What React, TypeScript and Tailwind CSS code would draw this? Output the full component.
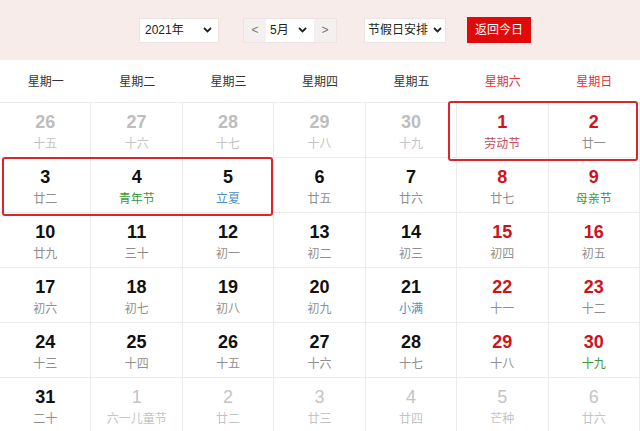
import React from 'react';

type Day = {
  n: number;
  sub: string;
  kind: 'prev' | 'cur' | 'next';
  red?: boolean;
  subColor?: string;
};

const WEEK = ['星期一', '星期二', '星期三', '星期四', '星期五', '星期六', '星期日'];

const GREEN = 'text-[#3c9a3c]';
const BLUE = 'text-[#4a8fc4]';

const days: Day[] = [
  { n: 26, sub: '十五', kind: 'prev' },
  { n: 27, sub: '十六', kind: 'prev' },
  { n: 28, sub: '十七', kind: 'prev' },
  { n: 29, sub: '十八', kind: 'prev' },
  { n: 30, sub: '十九', kind: 'prev' },
  { n: 1, sub: '劳动节', kind: 'cur', red: true, subColor: 'text-[#c9485a]' },
  { n: 2, sub: '廿一', kind: 'cur', red: true },
  { n: 3, sub: '廿二', kind: 'cur' },
  { n: 4, sub: '青年节', kind: 'cur', subColor: GREEN },
  { n: 5, sub: '立夏', kind: 'cur', subColor: BLUE },
  { n: 6, sub: '廿五', kind: 'cur' },
  { n: 7, sub: '廿六', kind: 'cur' },
  { n: 8, sub: '廿七', kind: 'cur', red: true },
  { n: 9, sub: '母亲节', kind: 'cur', red: true, subColor: GREEN },
  { n: 10, sub: '廿九', kind: 'cur' },
  { n: 11, sub: '三十', kind: 'cur' },
  { n: 12, sub: '初一', kind: 'cur' },
  { n: 13, sub: '初二', kind: 'cur' },
  { n: 14, sub: '初三', kind: 'cur' },
  { n: 15, sub: '初四', kind: 'cur', red: true },
  { n: 16, sub: '初五', kind: 'cur', red: true },
  { n: 17, sub: '初六', kind: 'cur' },
  { n: 18, sub: '初七', kind: 'cur' },
  { n: 19, sub: '初八', kind: 'cur' },
  { n: 20, sub: '初九', kind: 'cur' },
  { n: 21, sub: '小满', kind: 'cur', subColor: BLUE },
  { n: 22, sub: '十一', kind: 'cur', red: true },
  { n: 23, sub: '十二', kind: 'cur', red: true },
  { n: 24, sub: '十三', kind: 'cur' },
  { n: 25, sub: '十四', kind: 'cur' },
  { n: 26, sub: '十五', kind: 'cur' },
  { n: 27, sub: '十六', kind: 'cur' },
  { n: 28, sub: '十七', kind: 'cur' },
  { n: 29, sub: '十八', kind: 'cur', red: true },
  { n: 30, sub: '十九', kind: 'cur', red: true, subColor: GREEN },
  { n: 31, sub: '二十', kind: 'cur' },
  { n: 1, sub: '六一儿童节', kind: 'next' },
  { n: 2, sub: '廿二', kind: 'next' },
  { n: 3, sub: '廿三', kind: 'next' },
  { n: 4, sub: '廿四', kind: 'next' },
  { n: 5, sub: '芒种', kind: 'next' },
  { n: 6, sub: '廿六', kind: 'next' },
];

const Chevron = () => (
  <svg width="9" height="6" viewBox="0 0 9 6" className="shrink-0">
    <path d="M1 1l3.5 3.5L8 1" fill="none" stroke="#222" strokeWidth="1.8" />
  </svg>
);

const DayCell: React.FC<{ d: Day }> = ({ d }) => {
  let numCls = 'font-bold text-[#111]';
  if (d.kind === 'prev') numCls = 'font-bold text-[#bdbdbd]';
  else if (d.kind === 'next') numCls = 'font-normal text-[#c4c4c4]';
  else if (d.red) numCls = 'font-bold text-[#d0121b]';

  let subCls = 'text-[#8f8f8f]';
  if (d.kind !== 'cur') subCls = 'text-[#c4c4c4]';
  else if (d.subColor) subCls = d.subColor;

  return (
    <div className="h-[55px] pt-[3px] border-r border-b border-[#ececec] flex flex-col items-center justify-center">
      <span className={`text-[18px] leading-[20px] font-['Liberation_Sans',Arial,sans-serif] ${numCls}`}>{d.n}</span>
      <span className={`mt-[4px] text-[12px] leading-[16px] ${subCls}`}>{d.sub}</span>
    </div>
  );
};

export default function App() {
  return (
    <div className="w-[640px] h-[431px] overflow-hidden bg-white font-['Liberation_Sans','Noto_Sans_CJK_SC',sans-serif] relative">
      {/* toolbar */}
      <div className="h-[60px] bg-[#f7ecea] flex items-center pl-[139px] text-[12px] text-[#222]">
        <div className="w-[80px] h-[25px] bg-white border border-[#ebe4e2] flex items-center justify-between pl-[5px] pr-[6px]">
          <span>2021年</span>
          <Chevron />
        </div>
        <div className="ml-[24px] flex h-[25px] border border-[#ebe4e2]">
          <div className="w-[22px] bg-[#f3f0ef] flex items-center justify-center text-[#777]">&lt;</div>
          <div className="w-[48px] bg-white flex items-center justify-between pl-[4px] pr-[7px]">
            <span>5月</span>
            <Chevron />
          </div>
          <div className="w-[22px] bg-[#f3f0ef] flex items-center justify-center text-[#777]">&gt;</div>
        </div>
        <div className="ml-[27px] w-[82px] h-[25px] bg-white border border-[#ebe4e2] flex items-center justify-between pl-[3px] pr-[3px]">
          <span>节假日安排</span>
          <Chevron />
        </div>
        <div className="ml-[21px] w-[64px] h-[26px] bg-[#df0a0a] text-white flex items-center justify-center">返回今日</div>
      </div>

      {/* week header */}
      <div className="grid grid-cols-7 h-[43px] border-b border-[#ececec] text-[12px]">
        {WEEK.map((w, i) => (
          <div key={w} className={`flex items-center justify-center pt-[2px] ${i >= 5 ? 'text-[#d9363e]' : 'text-[#333]'}`}>
            {w}
          </div>
        ))}
      </div>

      {/* days */}
      <div className="grid grid-cols-7">
        {days.map((d, i) => (
          <DayCell key={i} d={d} />
        ))}
      </div>

      {/* highlight boxes */}
      <div className="absolute left-[448px] top-[101px] w-[190px] h-[60px] border-2 border-[#d8262c] rounded-[3px] pointer-events-none" />
      <div className="absolute left-[2px] top-[157px] w-[271px] h-[59px] border-2 border-[#d8262c] rounded-[3px] pointer-events-none" />
    </div>
  );
}
